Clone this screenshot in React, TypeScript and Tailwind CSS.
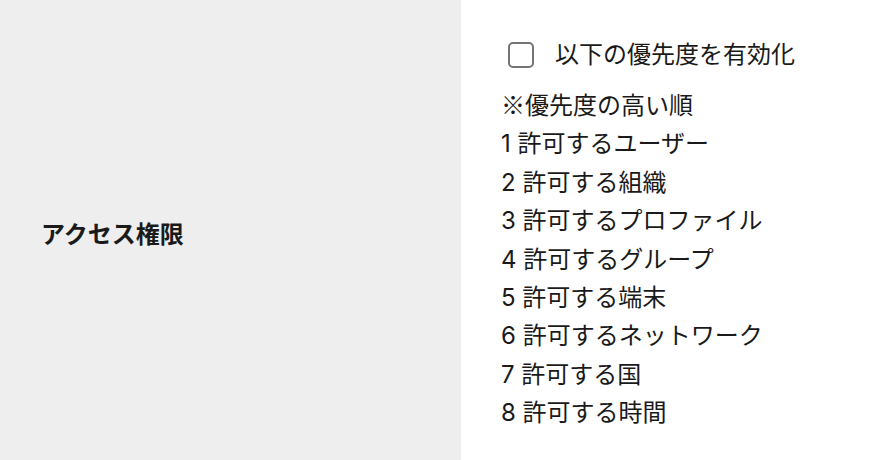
const priorities = [
  '許可するユーザー',
  '許可する組織',
  '許可するプロファイル',
  '許可するグループ',
  '許可する端末',
  '許可するネットワーク',
  '許可する国',
  '許可する時間',
];

export default function App() {
  return (
    <div
      className="flex h-[460px] w-[870px] bg-white text-[#1a1a1a]"
      style={{ fontFamily: 'Inter, "Noto Sans CJK JP", "Noto Sans", sans-serif' }}
    >
      <div className="flex w-[461px] shrink-0 items-center bg-[#eeeeee] pl-[41px] pt-[10px]">
        <span className="text-[24px] font-bold">アクセス権限</span>
      </div>

      <div className="flex flex-1 flex-col whitespace-nowrap pl-[40px] pt-[36px] text-[24px] leading-[1.6]">
        <label className="flex items-center pl-[7px]">
          <span className="box-border h-[26px] w-[26px] shrink-0 rounded-[5px] border-2 border-[#747474] bg-white" />
          <span className="ml-[21px]">以下の優先度を有効化</span>
        </label>
        <div className="mt-[11px]">
          <p className="h-[40px]">
            <span className="font-['Noto_Sans_CJK_JP']">※</span>優先度の高い順
          </p>
          {priorities.map((name, i) => (
            <p key={name}>
              {i + 1} {name}
            </p>
          ))}
        </div>
      </div>
    </div>
  );
}
